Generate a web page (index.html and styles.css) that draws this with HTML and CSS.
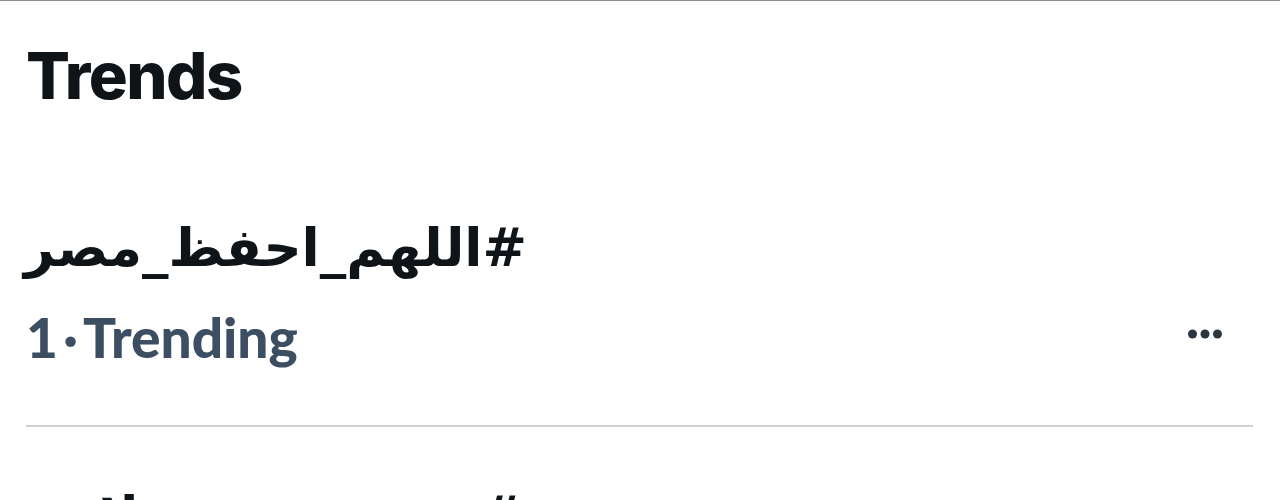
FILE: index.html
```html
<!DOCTYPE html>
<html lang="en">
  <head>
    <meta charset="utf8">
    <meta name="viewport" content="width=device-width, initial-scale=1">
    <title>Trends</title>
    <link rel="stylesheet" href="styles.css">
  </head>

  <body>
    <main class="trends">
      <h1 class="trends-title">Trends</h1>

      <div class="trend">
        <div class="trend-name" dir="rtl">#اللهم_احفظ_مصر</div>
        <div class="trend-meta">
          <span class="trend-rank">1<span class="sep">·</span>Trending</span>
          <button class="more" aria-label="More">
            <svg width="34" height="10" viewBox="0 0 34 10">
              <circle cx="4.5" cy="5" r="4.5"></circle>
              <circle cx="17" cy="5" r="4.5"></circle>
              <circle cx="29.5" cy="5" r="4.5"></circle>
            </svg>
          </button>
        </div>
      </div>

      <div class="trend">
        <div class="trend-name" dir="rtl">#مصر_تنتصر_بلادي</div>
      </div>
    </main>
  </body>
</html>
```

FILE: styles.css
```css
:root {
  font-family: Inter, "Noto Sans", sans-serif;
  color: #0f1419;
  background-color: #fff;
}

body {
  margin: 0;
  border-top: 1px solid #8e8e8e;
  overflow: hidden;
  height: 499px;
}

.trends {
  padding: 0 27px 0 26px;
}

.trends-title {
  margin: 0;
  padding-top: 36px;
  font-size: 65px;
  font-weight: 800;
  letter-spacing: -1.5px;
  line-height: 78px;
}

.trend {
  padding-top: 98px;
  border-bottom: 2px solid #d0d0d0;
}
.trend:last-child {
  border-bottom: none;
  padding-top: 54px;
}

.trend-name {
  text-align: left;
  direction: rtl;
  unicode-bidi: plaintext;
  width: max-content;
  margin-left: -2px;
  font-family: "DejaVu Sans", sans-serif;
  font-size: 53px;
  font-weight: bold;
  line-height: 70px;
}

.trend-meta {
  display: flex;
  align-items: center;
  justify-content: space-between;
  padding-bottom: 56px;
  margin-top: 22px;
}

.trend-rank {
  font-family: Lato, sans-serif;
  font-size: 55px;
  font-weight: 900;
  color: #3c4e62;
  line-height: 64px;
}

.sep {
  margin: 0 5px;
  font-weight: 700;
}

.more {
  border: 0;
  padding: 0;
  margin-right: 31px;
  margin-top: -6px;
  background: none;
  fill: #2c3640;
  display: flex;
}
```
